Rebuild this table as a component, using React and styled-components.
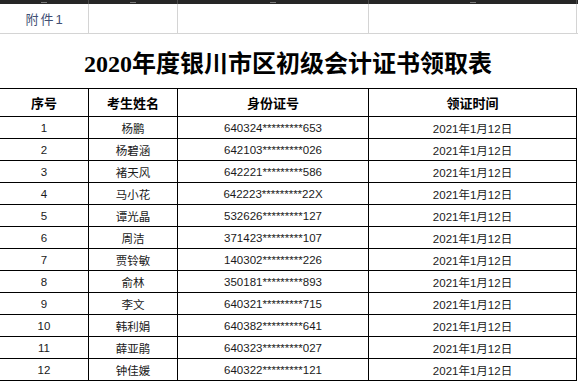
import React from "react";
import styled, { createGlobalStyle } from "styled-components";

const GlobalStyle = createGlobalStyle`
  html, body {
    margin: 0;
    padding: 0;
    background: #fff;
  }
  body {
    font-family: "Liberation Sans", "Noto Sans CJK SC", sans-serif;
    color: #1a1a1a;
  }
`;

const COLS = "89px 89px 191px 208px 1px";

const Sheet = styled.div`
  width: 578px;
  height: 381px;
  overflow: hidden;
  background: #fff;
`;

const ColumnBar = styled.div`
  display: grid;
  grid-template-columns: ${COLS};
  height: 4px;
  overflow: hidden;
  background: #262626;
`;

// only the foot of the column letter shows above the sheet edge
const ColumnHead = styled.div`
  position: relative;
  border-right: 1px solid #4a4a4a;

  &:after {
    content: "";
    position: absolute;
    left: calc(50% - 3px);
    bottom: 1px;
    width: 6px;
    height: 1px;
    background: #7a7a7a;
  }
`;

const AttachRow = styled.div`
  display: grid;
  grid-template-columns: ${COLS};
  height: 30px;
  box-sizing: border-box;
  border-bottom: 1px solid #d4d4d4;
`;

const GridCell = styled.div`
  box-sizing: border-box;
  border-right: 1px solid #d4d4d4;
  display: flex;
  align-items: center;
  justify-content: center;
`;

const AttachLabel = styled.span`
  font-size: 13px;
  letter-spacing: 2px;
  color: #3f4f74;
  padding-left: 2px;
`;

const Title = styled.h1`
  margin: 0;
  height: 54px;
  display: flex;
  align-items: center;
  justify-content: center;
  padding-right: 2px;
  font-family: "Liberation Serif", "Noto Sans CJK SC", serif;
  font-size: 24px;
  font-weight: 700;
  color: #000;
`;

const Row = styled.div`
  display: grid;
  grid-template-columns: ${COLS};
  height: ${(p) => (p.$head ? "29px" : "22px")};
  box-sizing: border-box;
  border-top: ${(p) => (p.$head ? "1px solid #000" : "none")};
  border-bottom: 1px solid #000;
  width: 577px;
`;

const Cell = styled.div`
  box-sizing: border-box;
  border-right: 1px solid #000;
  display: flex;
  align-items: center;
  justify-content: center;
  white-space: nowrap;
  font-size: ${(p) => (p.$head ? "13px" : "11.5px")};
  font-weight: ${(p) => (p.$head ? 700 : 400)};
  color: ${(p) => (p.$head ? "#000" : "#1a1a1a")};
`;

const people = [
  ["杨鹏", "640324*********653"],
  ["杨碧涵", "642103*********026"],
  ["褚天风", "642221*********586"],
  ["马小花", "642223*********22X"],
  ["谭光晶", "532626*********127"],
  ["周洁", "371423*********107"],
  ["贾铃敏", "140302*********226"],
  ["俞林", "350181*********893"],
  ["李文", "640321*********715"],
  ["韩利娟", "640382*********641"],
  ["薛亚鹃", "640323*********027"],
  ["钟佳媛", "640322*********121"],
];

const App = () => {
  return (
    <Sheet>
      <GlobalStyle />
      <ColumnBar>
        <ColumnHead />
        <ColumnHead />
        <ColumnHead />
        <ColumnHead />
      </ColumnBar>
      <AttachRow>
        <GridCell>
          <AttachLabel>附件1</AttachLabel>
        </GridCell>
        <GridCell />
        <GridCell />
        <GridCell />
      </AttachRow>
      <Title>2020年度银川市区初级会计证书领取表</Title>
      <Row $head>
        <Cell $head>序号</Cell>
        <Cell $head>考生姓名</Cell>
        <Cell $head>身份证号</Cell>
        <Cell $head>领证时间</Cell>
      </Row>
      {people.map(([name, id], i) => (
        <Row key={id}>
          <Cell>{i + 1}</Cell>
          <Cell>{name}</Cell>
          <Cell>{id}</Cell>
          <Cell>2021年1月12日</Cell>
        </Row>
      ))}
    </Sheet>
  );
};

export default App;
